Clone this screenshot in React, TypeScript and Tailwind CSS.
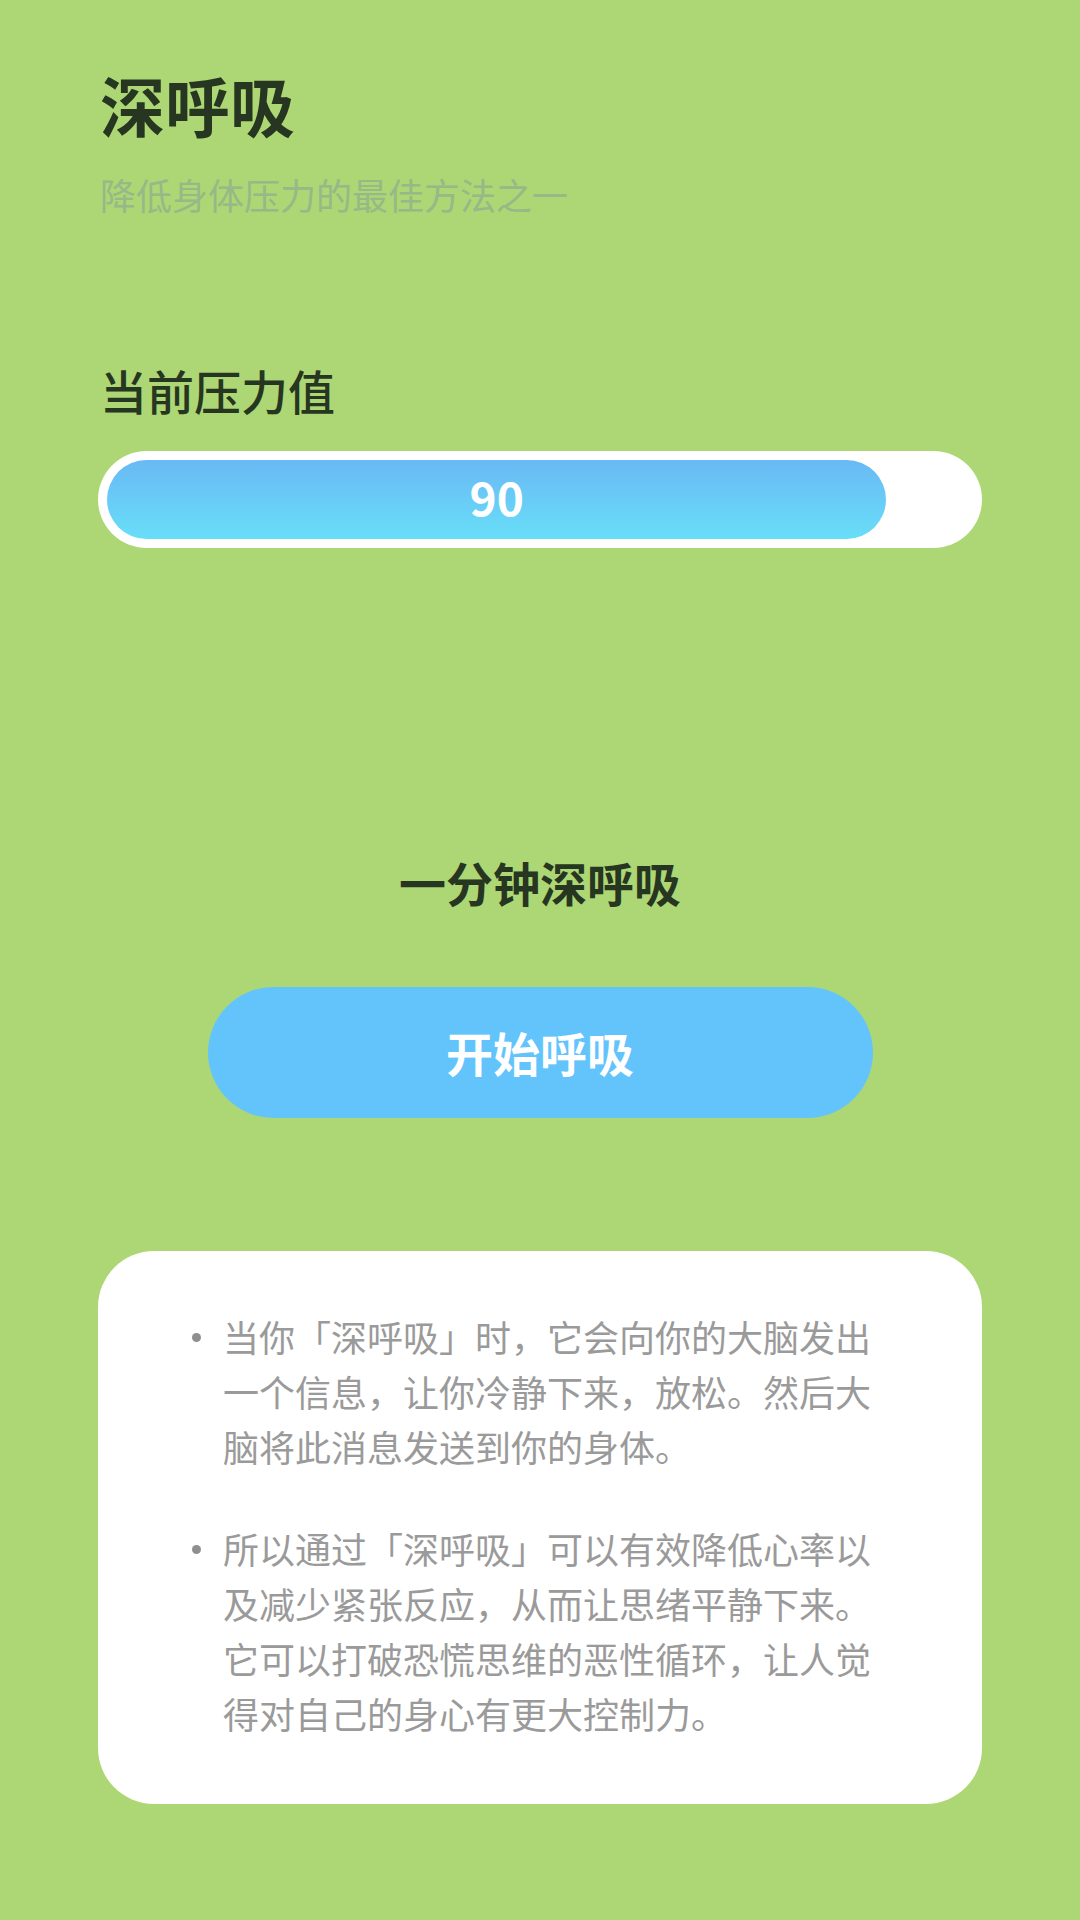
import React from 'react';

const tips = [
  '当你「深呼吸」时，它会向你的大脑发出一个信息，让你冷静下来，放松。然后大脑将此消息发送到你的身体。',
  '所以通过「深呼吸」可以有效降低心率以及减少紧张反应，从而让思绪平静下来。它可以打破恐慌思维的恶性循环，让人觉得对自己的身心有更大控制力。',
];

export default function App() {
  const stress = 90;

  return (
    <div
      className="w-[1080px] h-[1920px] bg-[#add674] flex flex-col px-[98px] overflow-hidden"
      style={{ fontFamily: '"Noto Sans CJK SC", "Noto Sans", sans-serif' }}
    >
      {/* Header */}
      <h1 className="pt-[72px] text-[65px] leading-[65px] font-bold text-[#263621] pl-[2px]">深呼吸</h1>
      <p className="mt-[39px] text-[36px] leading-[36px] text-[#97b887] pl-[2px]">降低身体压力的最佳方法之一</p>

      {/* Stress meter */}
      <h2 className="mt-[154px] text-[47px] leading-[47px] font-medium text-[#263621] pl-[2px]">当前压力值</h2>
      <div className="mt-[38px] h-[97px] w-full rounded-full bg-white p-[9px]">
        <div
          className="h-full rounded-full bg-gradient-to-b from-[#69b9f4] to-[#68def8] flex items-center justify-center"
          style={{ width: `${stress}%` }}
        >
          <span className="text-[46px] leading-none font-bold text-white -mt-[8px]">{stress}</span>
        </div>
      </div>

      {/* Breathing action */}
      <h3 className="mt-[310px] text-center text-[47px] leading-[47px] font-bold text-[#263621]">一分钟深呼吸</h3>
      <button className="mt-[82px] mx-auto w-[665px] h-[131px] rounded-full bg-[#63c4fb] text-white text-[47px] font-bold flex items-center justify-center">
        开始呼吸
      </button>

      {/* Info card */}
      <div className="mt-[133px] h-[553px] rounded-[56px] bg-white pt-[58px] pl-[94px] flex flex-col gap-[47px]">
        {tips.map((t, i) => (
          <div key={i} className="flex items-start">
            <span className="mt-[24px] w-[9px] h-[9px] rounded-full bg-[#8f8f8f] shrink-0" />
            <p className="ml-[22px] w-[650px] text-[36px] leading-[55px] text-[#9a9a9a]">{t}</p>
          </div>
        ))}
      </div>
    </div>
  );
}
